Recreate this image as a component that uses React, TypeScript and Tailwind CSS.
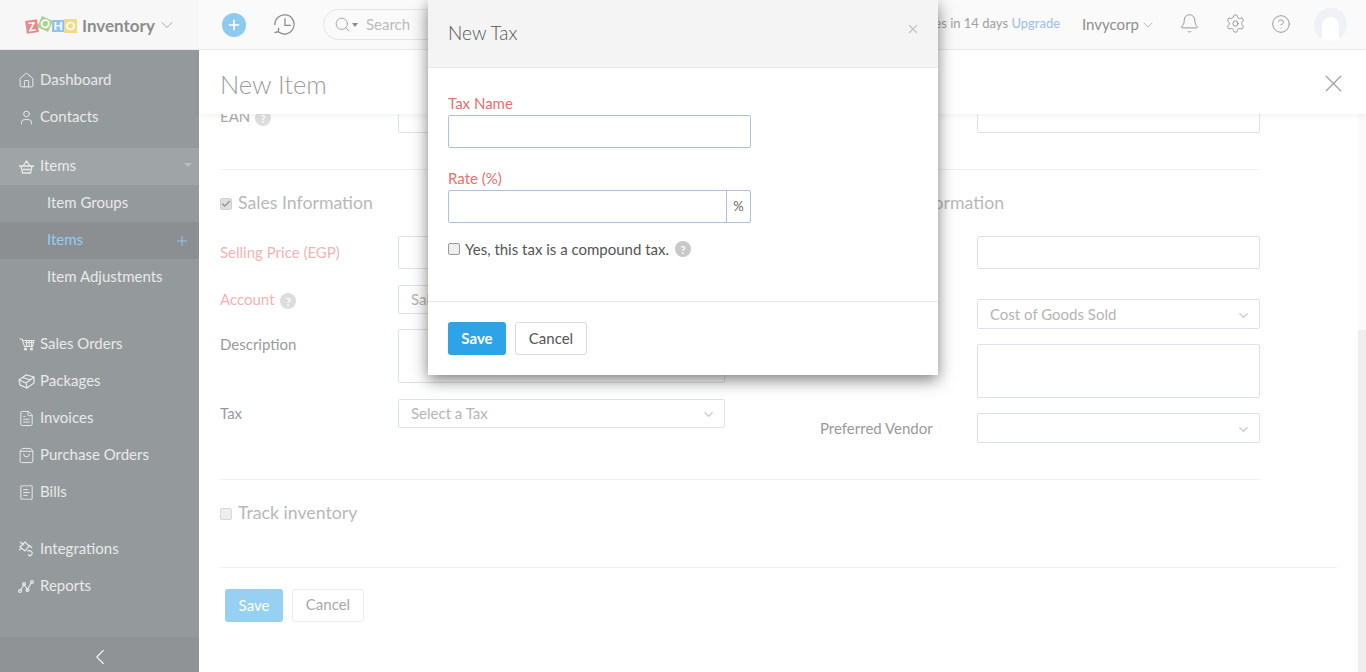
import { Home, User, FileText, ShoppingBag, ReceiptText, ChevronDown, ChevronLeft, Plus, Search, Bell, Settings, CircleHelp, X, Check } from "lucide-react";
import type { ReactNode } from "react";

function Row({ icon, label, className = "" }: { icon: ReactNode; label: string; className?: string }) {
  return (
    <div className={`h-[37px] flex items-center pl-[18px] gap-[5px] text-[#e9eaea] ${className}`}>
      <span className="w-[17px] flex justify-center">{icon}</span>
      <span className="-mt-[2px]">{label}</span>
    </div>
  );
}

function Help({ className = "" }: { className?: string }) {
  return <span className={`inline-flex w-[16px] h-[16px] rounded-full items-center justify-center text-white text-[11px] font-bold leading-none align-middle ${className}`}>?</span>;
}

function Sel({ text, className = "" }: { text?: string; className?: string }) {
  return (
    <div className={`border border-[#dbe2ee] rounded-[2px] flex items-center justify-between pl-3 pr-[8px] text-[#b5b5b5] ${className}`}>
      <span>{text}</span>
      <ChevronDown size={15} className="text-[#c8c8c8] mt-[2px]" />
    </div>
  );
}

const sic = { size: 17, strokeWidth: 1.4 };

function Basket() {
  return (
    <svg width="17" height="14" viewBox="0 0 17 14" fill="none" stroke="currentColor" strokeWidth="1.3">
      <path d="M1 6h15M3 6l1.5 7h8L14 6M5 6l3.5-5L12 6M5 9.5h7" />
    </svg>
  );
}
function Cart() {
  return (
    <svg width="16" height="13" viewBox="0 0 16 13" fill="none" stroke="currentColor" strokeWidth="1.1">
      <path d="M0.5 1H3l2.5 7.5h8L15 2.5H3.5M6 4.5h8M7.5 2.5v6M10 2.5v6M12.5 2.5v6" />
      <circle cx="6.5" cy="11" r="1" fill="currentColor" />
      <circle cx="12.5" cy="11" r="1" fill="currentColor" />
    </svg>
  );
}
function Box() {
  return (
    <svg width="17" height="15" viewBox="0 0 17 15" fill="none" stroke="currentColor" strokeWidth="1.2">
      <path d="M1 6l7-5 8 2v6l-7 5-7-3zM1 6l7 3 1 5M8 9l8-6M4.5 3.5l8 2.5" />
    </svg>
  );
}
function Plug() {
  return (
    <svg width="17" height="17" viewBox="0 0 17 17" fill="none" stroke="currentColor" strokeWidth="1.2">
      <path d="M2 1l4 3M7 1L2 6l5 4 4-5zM1 9l3-2M9 10c4-1 6 1 5 3s-4 3-3 0M11 4l3 3" />
    </svg>
  );
}
function Trend() {
  return (
    <svg width="17" height="13" viewBox="0 0 17 13" fill="none" stroke="currentColor" strokeWidth="1.2">
      <path d="M2.5 10.5L6 4.5l3.5 5 4-7" />
      <circle cx="2" cy="11" r="1.4" />
      <circle cx="6" cy="4" r="1.4" />
      <circle cx="9.5" cy="10" r="1.4" />
      <circle cx="14" cy="2" r="1.4" />
    </svg>
  );
}
function Clock() {
  return (
    <svg width="23" height="23" viewBox="0 0 24 24" fill="none" stroke="currentColor" strokeWidth="1.3" className="ml-[27px] text-[#8a8a8a]">
      <path d="M5.5 19.5A10 10 0 1 0 2 12.5" />
      <path d="M12.5 5.5v7.5h6" />
      <path d="M1.5 20.5l4-1 .5-4" />
    </svg>
  );
}

export default function App() {
  return (
    <div className="relative w-[1366px] h-[672px] overflow-hidden bg-white text-[15px] font-['Lato','Liberation_Sans',sans-serif] text-[#9a9a9a]">
      {/* top bar */}
      <div className="h-[50px] flex bg-[#fafafa] border-b border-[#ececec]">
        <div className="w-[199px] bg-[#f7f7f7] flex items-center pl-[26px]">
          <div className="flex items-center font-bold text-[12px] text-white leading-none">
            <span className="w-[12px] h-[13px] bg-[#e58a8d] flex items-center justify-center -rotate-[8deg] mt-[3px]">Z</span>
            <span className="w-[12px] h-[12px] bg-[#a9d38f] flex items-center justify-center -mt-[2px] ml-px rotate-[24deg]">O</span>
            <span className="w-[12px] h-[12px] bg-[#8fc3ee] flex items-center justify-center ml-px mt-[3px]">H</span>
            <span className="w-[13px] h-[14px] bg-[#f3da87] flex items-center justify-center mt-[2px]">O</span>
          </div>
          <span className="ml-[5px] text-[17px] font-bold text-[#8d8d8d] mt-[2px]">Inventory</span>
          <ChevronDown size={20} strokeWidth={0.9} className="ml-[2px] text-[#8d8d8d]" />
        </div>
        <div className="flex-1 flex items-center pl-[23px]">
          <span className="w-[24px] h-[24px] rounded-full bg-[#8ccaf2] flex items-center justify-center">
            <Plus size={16} strokeWidth={2.4} className="text-white" />
          </span>
          <Clock />
          <div className="ml-[27px] w-[240px] h-[31px] border border-[#e4e4e4] rounded-full flex items-center pl-[10px] text-[#bbbbbb]">
            <Search size={17} strokeWidth={1.2} className="text-[#9a9a9a]" />
            <span className="w-0 h-0 border-x-[3.5px] border-x-transparent border-t-[4px] border-t-[#8a8a8a] ml-[1px]"></span>
            <span className="ml-[8px] -mt-px">Search</span>
          </div>
          <div className="ml-auto flex items-center">
            <span className="text-[13px] text-[#a0a0a0] whitespace-nowrap -mt-[1px]">Your trial expires in 14 days <span className="text-[#9dbde8]">Upgrade</span></span>
            <span className="ml-[22px] text-[#8e8e8e] -mt-px">Invycorp</span>
            <ChevronDown size={16} strokeWidth={0.9} className="ml-[1px] text-[#8e8e8e]" />
            <Bell size={21} strokeWidth={1} className="ml-[23px] text-[#8a8a8a] -mt-[2px]" />
            <Settings size={21} strokeWidth={1} className="ml-[25px] text-[#8a8a8a] -mt-[2px]" />
            <CircleHelp size={20} strokeWidth={1} className="ml-[25px] text-[#8a8a8a] -mt-[2px]" />
            <span className="ml-[23px] mr-[19px] w-[33px] h-[33px] rounded-full bg-[#eef1f6] flex items-end justify-center overflow-hidden">
              <span className="w-[17px] h-[24px] rounded-t-full rounded-b-[8px] bg-white"></span>
            </span>
          </div>
        </div>
      </div>

      <div className="flex h-[622px]">
        {/* sidebar */}
        <aside className="w-[199px] bg-[#94999b] flex flex-col pt-[12px]">
          <Row icon={<Home {...sic} />} label="Dashboard" />
          <Row icon={<User {...sic} />} label="Contacts" />
          <div className="mt-[12px] bg-[#9fa4a6] relative">
            <Row icon={<Basket />} label="Items" />
            <span className="absolute right-[7px] top-[15px] w-0 h-0 border-x-[4px] border-x-transparent border-t-[4px] border-t-[#b9bdbf]"></span>
          </div>
          <div className="h-[37px] flex items-center pl-[47px] text-[#e9eaea]"><span className="-mt-[2px]">Item Groups</span></div>
          <div className="h-[37px] flex items-center justify-between pl-[47px] pr-[9px] bg-[#8b8f91] text-[#93cdf6]">
            <span className="-mt-[2px]">Items</span>
            <Plus size={16} strokeWidth={1.3} />
          </div>
          <div className="h-[37px] flex items-center pl-[47px] text-[#e9eaea]"><span className="-mt-[2px]">Item Adjustments</span></div>
          <Row icon={<Cart />} label="Sales Orders" className="mt-[30px]" />
          <Row icon={<Box />} label="Packages" />
          <Row icon={<FileText {...sic} />} label="Invoices" />
          <Row icon={<ShoppingBag {...sic} />} label="Purchase Orders" />
          <Row icon={<ReceiptText {...sic} />} label="Bills" />
          <Row icon={<Plug />} label="Integrations" className="mt-[20px]" />
          <Row icon={<Trend />} label="Reports" />
          <div className="mt-auto h-[35px] bg-[#8f9395] flex items-center justify-center text-[#f2f2f2]">
            <ChevronLeft size={26} strokeWidth={1} className="mt-[5px]" />
          </div>
        </aside>

        {/* main */}
        <main className="flex-1 flex flex-col relative">
          <div className="h-[64px] flex items-center justify-between pl-[21px] pr-[18px] shadow-[0_2px_6px_rgba(0,0,0,0.05)] relative z-10 bg-white">
            <span className="text-[25.5px] font-light text-[#9c9c9c] mt-[5px]">New Item</span>
            <X size={29} strokeWidth={1.1} className="text-[#a5a5a5] mt-[2px]" />
          </div>
          <div className="flex-1 flex overflow-hidden">
            <div className="flex-1 overflow-hidden pl-[21px] pr-[21px]">
              <div className="-mt-[14px]">
                <div className="w-[1040px] flex justify-between h-[69px] items-start">
                  <div className="flex items-center h-[33px]">
                    <span className="w-[178px] text-[#a8a8a8]">EAN <Help className="bg-[#dddddd] ml-[1px]" /></span>
                    <div className="w-[327px] h-[33px] border border-[#dbe2ee] rounded-[2px]"></div>
                  </div>
                  <div className="w-[283px] h-[33px] border border-[#dbe2ee] rounded-[2px]"></div>
                </div>
                <div className="w-[1040px] border-t border-[#f0f0f0]"></div>
                <div className="w-[1040px] flex justify-between pt-[22px]">
                  <div className="w-[505px]">
                    <div className="flex items-center h-[23px] text-[17.7px] text-[#b8b8b8]">
                      <span className="w-[12px] h-[12px] rounded-[2px] bg-[#dedede] border border-[#cfcfcf] flex items-center justify-center mr-[6px]"><Check size={10} strokeWidth={3} className="text-[#8f8f8f]" /></span>
                      Sales Information
                    </div>
                    <div className="flex items-center h-[33px] mt-[21px]">
                      <span className="w-[178px] text-[#f2b3b3]">Selling Price (EGP)</span>
                      <div className="w-[327px] h-[33px] border border-[#dbe2ee] rounded-[2px]"></div>
                    </div>
                    <div className="flex items-center h-[29px] mt-[16px]">
                      <span className="w-[178px] text-[#f2b3b3]">Account <Help className="bg-[#dddddd] ml-[2px]" /></span>
                      <Sel text="Sales" className="w-[327px] h-[29px]" />
                    </div>
                    <div className="flex items-start h-[54px] mt-[15px]">
                      <span className="w-[178px] pt-[4px] text-[#9a9a9a]">Description</span>
                      <div className="w-[327px] h-[54px] border border-[#dbe2ee] rounded-[2px]"></div>
                    </div>
                    <div className="flex items-center h-[29px] mt-[16px]">
                      <span className="w-[178px] text-[#9a9a9a]">Tax</span>
                      <Sel text="Select a Tax" className="w-[327px] h-[29px]" />
                    </div>
                  </div>
                  <div className="w-[440px]">
                    <div className="flex items-center h-[23px] text-[17.7px] text-[#b8b8b8]">
                      <span className="w-[12px] h-[12px] rounded-[2px] bg-[#dedede] border border-[#cfcfcf] mr-[6px]"></span>
                      Purchase Information
                    </div>
                    <div className="flex items-center h-[33px] mt-[21px]">
                      <span className="w-[157px] text-[#f2b3b3]">Cost Price (EGP)</span>
                      <div className="w-[283px] h-[33px] border border-[#dbe2ee] rounded-[2px]"></div>
                    </div>
                    <div className="flex items-center h-[30px] mt-[30px]">
                      <span className="w-[157px] text-[#f2b3b3]">Account</span>
                      <Sel text="Cost of Goods Sold" className="w-[283px] h-[30px]" />
                    </div>
                    <div className="flex items-start h-[54px] mt-[15px]">
                      <span className="w-[157px] pt-[4px] text-[#9a9a9a]">Description</span>
                      <div className="w-[283px] h-[54px] border border-[#dbe2ee] rounded-[2px]"></div>
                    </div>
                    <div className="flex items-center h-[30px] mt-[15px]">
                      <span className="w-[157px] text-[#9a9a9a]">Preferred Vendor</span>
                      <Sel className="w-[283px] h-[30px]" />
                    </div>
                  </div>
                </div>
                <div className="w-[1040px] border-t border-[#f0f0f0] mt-[36px]"></div>
                <div className="flex items-center h-[23px] mt-[22px] text-[17.7px] text-[#b8b8b8]">
                  <span className="w-[12px] h-[12px] rounded-[2px] bg-[#eeeeee] border border-[#d8d8d8] mr-[6px]"></span>
                  Track inventory
                </div>
                <div className="w-[1117px] border-t border-[#f0f0f0] mt-[42px]"></div>
                <div className="flex gap-[9px] mt-[21px] ml-[5px]">
                  <div className="w-[58px] h-[33px] rounded-[3px] bg-[#96d0f3] text-white flex items-center justify-center pb-px">Save</div>
                  <div className="w-[72px] h-[33px] rounded-[3px] border border-[#ececec] text-[#a8a8a8] flex items-center justify-center pb-[2px]">Cancel</div>
                </div>
              </div>
            </div>
            <div className="w-[8px] flex flex-col bg-[#fafafa]">
              <div className="h-[216px]"></div>
              <div className="flex-1 bg-[#eeeeee]"></div>
            </div>
          </div>
        </main>
      </div>

      {/* modal */}
      <div className="absolute left-[428px] top-0 w-[510px] h-[375px] bg-white shadow-[0_5px_15px_rgba(0,0,0,0.5)] flex flex-col z-20">
        <div className="h-[68px] bg-[#f4f4f4] border-b border-[#e8e8e8] flex justify-between pl-[20px] pr-[20px]">
          <span className="text-[19px] font-light text-[#555555] mt-[20px] leading-[26px]">New Tax</span>
          <X size={14} strokeWidth={2.2} className="text-[#c4c4c4] mt-[22px] -mr-[2px]" />
        </div>
        <div className="flex-1 px-[20px] pt-[25px]">
          <div className="text-[#e86f6f] leading-[20px]">Tax Name</div>
          <div className="w-[303px] h-[33px] border border-[#aebfdc] rounded-[2px] mt-[2px]"></div>
          <div className="text-[#e86f6f] leading-[20px] mt-[20px]">Rate (%)</div>
          <div className="w-[303px] h-[33px] border border-[#aebfdc] rounded-[2px] mt-[2px] flex justify-end">
            <div className="w-[24px] border-l border-[#aebfdc] flex items-center justify-center text-[13px] text-[#666666]">%</div>
          </div>
          <div className="flex items-center mt-[16px] h-[20px] text-[#555555]">
            <span className="w-[12px] h-[12px] rounded-[2px] bg-[#eeeeee] border border-[#9a9a9a] mr-[5px]"></span>
            <span>Yes, this tax is a compound tax.</span>
            <Help className="bg-[#c8c8c8] ml-[6px]" />
          </div>
        </div>
        <div className="h-[74px] border-t border-[#e8e8e8] flex gap-[9px] pl-[20px] pt-[20px]">
          <div className="w-[58px] h-[33px] rounded-[3px] bg-[#2ea3e8] text-white flex items-center justify-center font-bold pb-px">Save</div>
          <div className="w-[72px] h-[33px] rounded-[3px] border border-[#dcdcdc] text-[#555555] flex items-center justify-center pb-px">Cancel</div>
        </div>
      </div>
    </div>
  );
}
